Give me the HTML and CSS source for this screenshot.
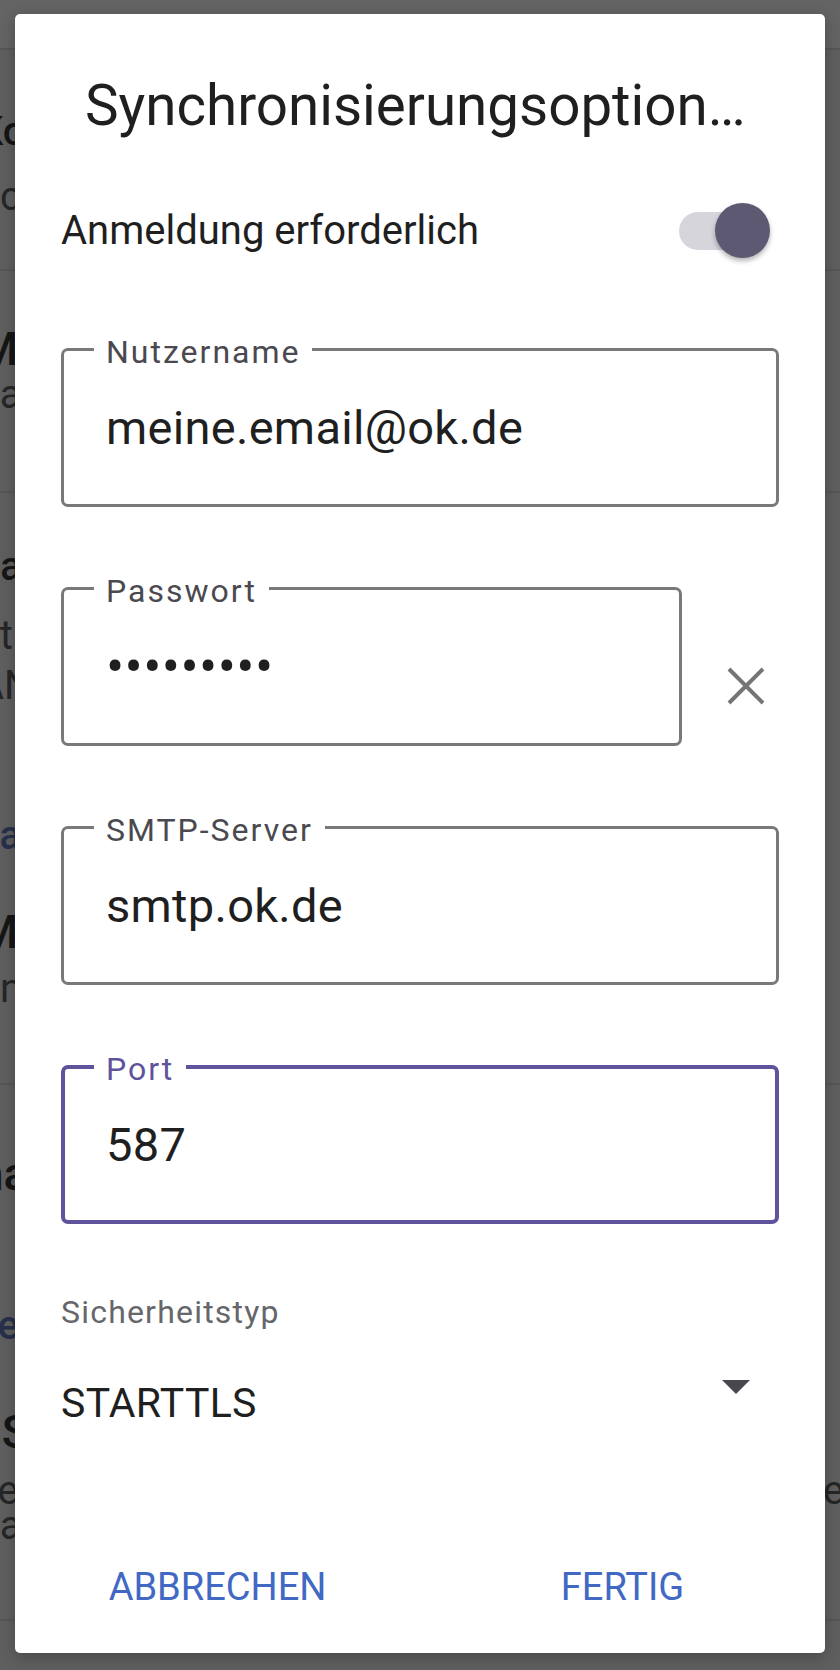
FILE: index.html
```html
<!DOCTYPE html>
<html lang="de">
<head>
    <meta charset="UTF-8">
    <meta name="viewport" content="width=device-width, initial-scale=1.0">
    <title>Synchronisierungsoptionen</title>
    <link rel="stylesheet" href="styles.css">
</head>
<body>
    <div class="screen">
        <div class="bg-list">
            <div class="bg-top"></div>
            <div class="bg-row row-1">
                <div class="bg-line title l-1a">Konto synchronisieren</div>
                <div class="bg-line sub l-1b">nc Konto verbunden</div>
            </div>
            <div class="bg-row row-2">
                <div class="bg-line title big l-2a">Mail-Konto</div>
                <div class="bg-line sub l-2b">aa Adresse</div>
            </div>
            <div class="bg-row row-3">
                <div class="bg-line title l-3a">nachrichten</div>
                <div class="bg-line sub l-3b">ät Änderungen</div>
                <div class="bg-line sub l-3c">AN Anhänge</div>
                <div class="bg-line blue l-3d">aa Erweitert</div>
                <div class="bg-line title big l-3e">Mail-Server</div>
                <div class="bg-line sub l-3f">nn Einstellungen</div>
            </div>
            <div class="bg-row row-4">
                <div class="bg-line title big l-4a">nachricht</div>
                <div class="bg-line blue l-4b">ve Verlauf</div>
                <div class="bg-line title big l-4c">sS Speicher</div>
                <div class="bg-line sub split l-4d"><span>ze Anzeigen</span><span class="edge">e</span></div>
                <div class="bg-line sub l-4e">aa Archiv</div>
            </div>
            <div class="bg-row row-5"></div>
        </div>

        <div class="dialog">
            <div class="dialog-body">
                <h2 class="dialog-title">Synchronisierungsoptionen</h2>

                <div class="switch-row">
                    <span class="switch-label">Anmeldung erforderlich</span>
                    <span class="switch">
                        <span class="switch-track"></span>
                        <span class="switch-thumb"></span>
                    </span>
                </div>

                <div class="fields">
                    <div class="field">
                        <label class="field-label">Nutzername</label>
                        <span class="field-value">meine.email@ok.de</span>
                    </div>
                    <div class="field-row">
                        <div class="field field-short">
                            <label class="field-label">Passwort</label>
                            <span class="field-value dots">•••••••••</span>
                        </div>
                        <button class="clear-btn" aria-label="Löschen">
                            <svg width="38" height="38" viewBox="0 0 38 38">
                                <path d="M2 2 L36 36 M36 2 L2 36" stroke="#757575" stroke-width="4" fill="none"/>
                            </svg>
                        </button>
                    </div>
                    <div class="field">
                        <label class="field-label">SMTP-Server</label>
                        <span class="field-value">smtp.ok.de</span>
                    </div>
                    <div class="field field-focused">
                        <label class="field-label">Port</label>
                        <span class="field-value">587</span>
                    </div>
                </div>

                <div class="select-label">Sicherheitstyp</div>
                <div class="select-row">
                    <span class="select-value">STARTTLS</span>
                    <span class="select-arrow"></span>
                </div>
            </div>

            <div class="dialog-actions">
                <button class="text-btn">ABBRECHEN</button>
                <button class="text-btn">FERTIG</button>
            </div>
        </div>
    </div>
</body>
</html>
```

FILE: styles.css
```css
body {
    margin: 0;
    background-color: #5f5f5f;
    font-family: Roboto, "Noto Sans", sans-serif;
    color: #1f1f1f;
}
.screen {
    position: relative;
    width: 840px;
    height: 1670px;
    overflow: hidden;
}

/* dimmed list behind the dialog */
.bg-list {
    display: flex;
    flex-direction: column;
}
.bg-top {
    height: 48px;
    background-color: #646464;
}
.bg-row {
    border-top: 2px solid #575757;
    overflow: hidden;
}
.row-1 { height: 219px; }
.row-2 { height: 220px; }
.row-3 { height: 590px; }
.row-4 { height: 534px; }
.row-5 { height: 60px; }
.bg-line {
    font-size: 40px;
    line-height: 40px;
    height: 40px;
    white-space: nowrap;
    margin-left: -22px;
}
.bg-line.title {
    color: #151515;
    font-weight: 500;
}
.bg-line.big {
    font-size: 46px;
}
.bg-line.sub {
    color: #262626;
}
.bg-line.blue {
    color: #27304c;
    font-weight: 500;
}
.bg-line.split {
    display: flex;
    justify-content: space-between;
    margin-right: -4px;
}
.l-1a { margin-top: 62px; }
.l-1b { margin-top: 25px; }
.l-2a { margin-top: 58px; }
.l-2b { margin-top: 6px; }
.l-3a { margin-top: 54px; }
.l-3b { margin-top: 29px; }
.l-3c { margin-top: 10px; }
.l-3d { margin-top: 110px; }
.l-3e { margin-top: 56px; }
.l-3f { margin-top: 17px; }
.l-4a { margin-top: 69px; }
.l-4b { margin-top: 112px; }
.l-4c { margin-top: 66px; }
.l-4d { margin-top: 19px; }
.l-4e { margin-top: -5px; }

/* dialog */
.dialog {
    position: absolute;
    left: 15px;
    top: 14px;
    width: 810px;
    height: 1639px;
    background-color: #fff;
    border-radius: 5px;
    box-shadow: 0 4px 16px rgba(0, 0, 0, 0.25);
    display: flex;
    flex-direction: column;
}
.dialog-body {
    padding: 60px 46px 0 46px;
}
.dialog-title {
    margin: 0;
    padding-left: 24px;
    width: 670px;
    font-size: 56.5px;
    line-height: 64px;
    font-weight: 400;
    white-space: nowrap;
    overflow: hidden;
    text-overflow: ellipsis;
    color: #1f1f1f;
}
.switch-row {
    margin-top: 60px;
    height: 64px;
    display: flex;
    align-items: center;
    justify-content: space-between;
}
.switch-label {
    font-size: 40px;
}
.switch {
    position: relative;
    width: 91px;
    height: 55px;
    margin-right: 9px;
}
.switch-track {
    position: absolute;
    left: 0;
    top: 9px;
    width: 86px;
    height: 38px;
    border-radius: 19px;
    background-color: #d6d5db;
}
.switch-thumb {
    position: absolute;
    right: 0;
    top: 0;
    width: 55px;
    height: 55px;
    border-radius: 50%;
    background-color: #5e5972;
    box-shadow: 0 3px 5px rgba(0, 0, 0, 0.3);
}

.fields {
    margin-top: 86px;
    display: flex;
    flex-direction: column;
    gap: 80px;
}
.field {
    position: relative;
    height: 159px;
    box-sizing: border-box;
    border: 3px solid #797979;
    border-radius: 7px;
    display: flex;
    align-items: center;
    padding-left: 42px;
}
.field-label {
    position: absolute;
    top: -15px;
    left: 30px;
    padding: 0 12px;
    background-color: #fff;
    font-size: 32px;
    line-height: 32px;
    letter-spacing: 2px;
    color: #4b4950;
}
.field-value {
    font-size: 47px;
    letter-spacing: 0.3px;
    color: #1f1f1f;
}
.dots {
    font-size: 54px;
    letter-spacing: 0.4px;
}
.field-row {
    display: flex;
    align-items: flex-start;
}
.field-short {
    width: 621px;
}
.clear-btn {
    margin: 80px 0 0 45px;
    padding: 0;
    border: none;
    background: none;
    width: 38px;
    height: 38px;
    display: block;
}
.clear-btn svg {
    display: block;
}
.field-focused {
    border: 4px solid #5f549c;
    padding-left: 41px;
}
.field-focused .field-label {
    top: -16px;
    left: 29px;
    color: #5f549c;
}

.select-label {
    margin-top: 68px;
    font-size: 32px;
    line-height: 40px;
    letter-spacing: 1.2px;
    color: #66666b;
}
.select-row {
    margin-top: 47px;
    height: 48px;
    display: flex;
    align-items: flex-start;
    justify-content: space-between;
}
.select-value {
    font-size: 41px;
    line-height: 48px;
    letter-spacing: 0.3px;
    color: #1f1f1f;
}
.select-arrow {
    margin: 1px 29px 0 0;
    width: 0;
    height: 0;
    border-left: 14px solid transparent;
    border-right: 14px solid transparent;
    border-top: 14px solid #48464f;
}

.dialog-actions {
    margin-top: 136px;
    display: grid;
    grid-template-columns: 1fr 1fr;
}
.text-btn {
    border: none;
    background: none;
    padding: 0;
    font-family: Roboto, "Noto Sans", sans-serif;
    font-size: 38px;
    line-height: 48px;
    color: #4169c4;
    cursor: pointer;
}
```
